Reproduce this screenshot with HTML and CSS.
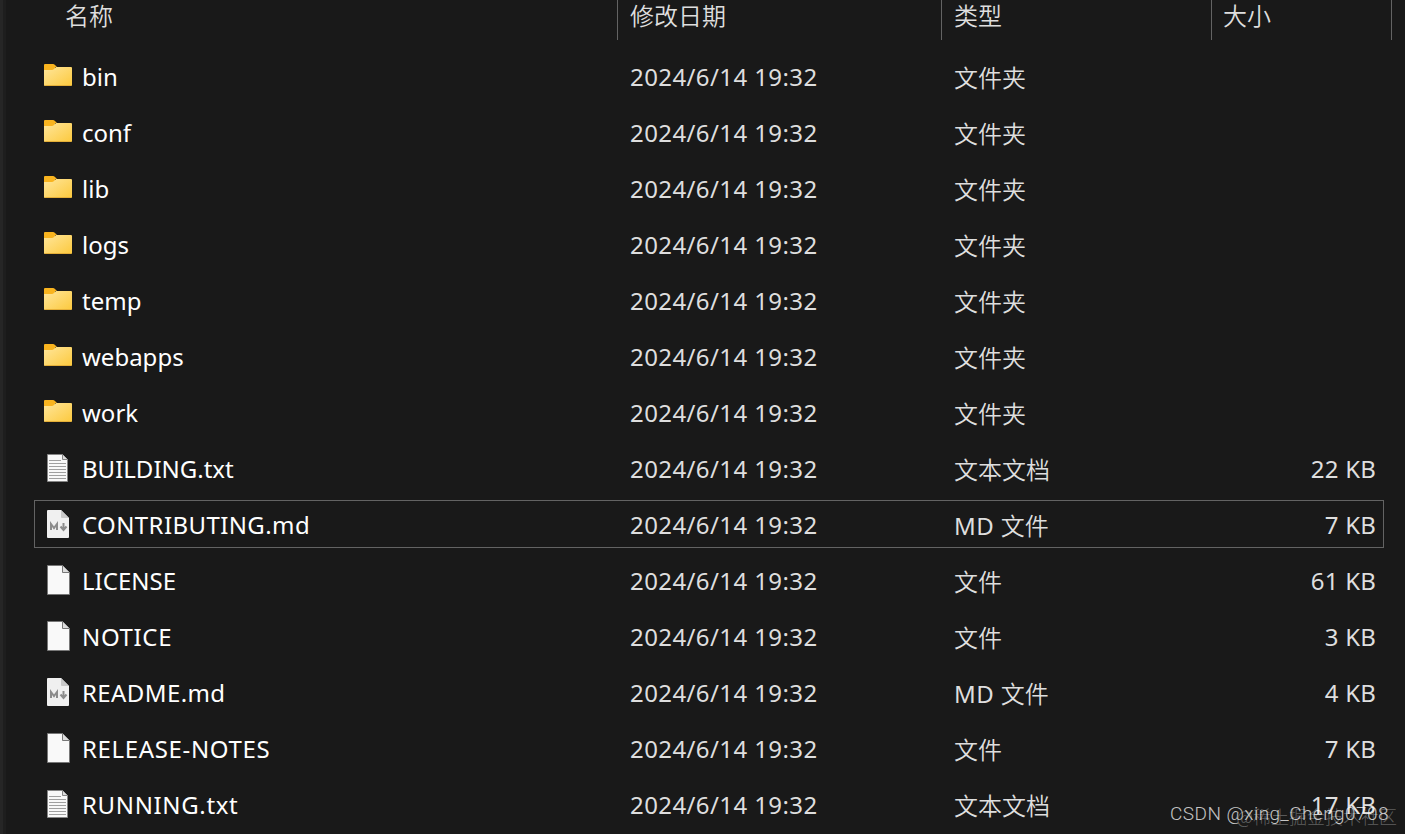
FILE: index.html
```html
<!DOCTYPE html>
<html lang="zh-CN">
<head>
  <meta charset="UTF-8">
  <title>文件列表</title>
  <link rel="stylesheet" href="styles.css">
</head>
<body>
  <!-- 图标 -->
  <svg class="defs" width="0" height="0">
    <defs>
      <linearGradient id="gold" x1="0" y1="0" x2="1" y2="1">
        <stop offset="0" stop-color="#ffe69b"/>
        <stop offset="1" stop-color="#fcc93d"/>
      </linearGradient>
    </defs>
    <symbol id="folder" viewBox="0 0 32 32">
      <path d="M2 5q0-1 1-1h8q1 0 2 1l2 2h-2v5H2z" fill="#f9b41f"/>
      <path d="M2 10h8q1 0 2-1l2-2h15q1 0 1 1v17q0 1-1 1H3q-1 0-1-1z" fill="url(#gold)"/>
      <path d="M2.500 25q.5 1 1.500 1h24q1 0 1.500-1z" fill="#e5af38"/>
    </symbol>
    <symbol id="text" viewBox="0 0 32 32">
      <path d="M5.500 2.500h15l5 5v22h-20z" fill="#f9f9f9" stroke="#858585"/>
      <path d="M20.500 2.500v5h5" fill="#ddd" stroke="#858585"/>
      <path d="M7 8.500h12M7 11.500h17M7 14.500h17M7 17.500h17M7 20.500h17M7 23.500h17M7 26.500h17" stroke="#a0a0a0"/>
    </symbol>
    <symbol id="md" viewBox="0 0 32 32">
      <path d="M6 2h13l8 8v19q0 1-1 1H6q-1 0-1-1V3q0-1 1-1z" fill="#f0f0f0"/>
      <path d="M19 2l8 8h-7q-1 0-1-1z" fill="#c9c9c9"/>
      <path d="M9 22v-6l3 4 3-4v6" fill="none" stroke="#8c8c8c" stroke-width="2"/>
      <path d="M21.500 15v6M18.500 18.500l3 3.500 3-3.500" fill="none" stroke="#8c8c8c" stroke-width="2"/>
    </symbol>
    <symbol id="blank" viewBox="0 0 32 32">
      <path d="M5.500 1.500h15l7 7v22h-22z" fill="#f9f9f9" stroke="#777"/>
      <path d="M20.500 1.500v7h7" fill="#ddd" stroke="#777"/>
    </symbol>
  </svg>

  <div class="explorer">
    <div class="header">
      <div class="head-name">名称</div>
      <div class="head-cell">修改日期</div>
      <div class="head-cell">类型</div>
      <div class="head-cell">大小</div>
    </div>
    <div class="list">
      <div class="row"><svg class="icon"><use href="#folder"/></svg><span class="name">bin</span><span class="date">2024/6/14 19:32</span><span class="type">文件夹</span><span class="size"></span></div>
      <div class="row"><svg class="icon"><use href="#folder"/></svg><span class="name">conf</span><span class="date">2024/6/14 19:32</span><span class="type">文件夹</span><span class="size"></span></div>
      <div class="row"><svg class="icon"><use href="#folder"/></svg><span class="name">lib</span><span class="date">2024/6/14 19:32</span><span class="type">文件夹</span><span class="size"></span></div>
      <div class="row"><svg class="icon"><use href="#folder"/></svg><span class="name">logs</span><span class="date">2024/6/14 19:32</span><span class="type">文件夹</span><span class="size"></span></div>
      <div class="row"><svg class="icon"><use href="#folder"/></svg><span class="name">temp</span><span class="date">2024/6/14 19:32</span><span class="type">文件夹</span><span class="size"></span></div>
      <div class="row"><svg class="icon"><use href="#folder"/></svg><span class="name">webapps</span><span class="date">2024/6/14 19:32</span><span class="type">文件夹</span><span class="size"></span></div>
      <div class="row"><svg class="icon"><use href="#folder"/></svg><span class="name">work</span><span class="date">2024/6/14 19:32</span><span class="type">文件夹</span><span class="size"></span></div>
      <div class="row"><svg class="icon"><use href="#text"/></svg><span class="name">BUILDING.txt</span><span class="date">2024/6/14 19:32</span><span class="type">文本文档</span><span class="size">22 KB</span></div>
      <div class="row focused"><svg class="icon"><use href="#md"/></svg><span class="name wide">CONTRIBUTING.md</span><span class="date">2024/6/14 19:32</span><span class="type"><span class="latin">MD </span>文件</span><span class="size">7 KB</span></div>
      <div class="row"><svg class="icon"><use href="#blank"/></svg><span class="name">LICENSE</span><span class="date">2024/6/14 19:32</span><span class="type">文件</span><span class="size">61 KB</span></div>
      <div class="row"><svg class="icon"><use href="#blank"/></svg><span class="name wider">NOTICE</span><span class="date">2024/6/14 19:32</span><span class="type">文件</span><span class="size">3 KB</span></div>
      <div class="row"><svg class="icon"><use href="#md"/></svg><span class="name wide">README.md</span><span class="date">2024/6/14 19:32</span><span class="type"><span class="latin">MD </span>文件</span><span class="size">4 KB</span></div>
      <div class="row"><svg class="icon"><use href="#blank"/></svg><span class="name wider">RELEASE-NOTES</span><span class="date">2024/6/14 19:32</span><span class="type">文件</span><span class="size">7 KB</span></div>
      <div class="row"><svg class="icon"><use href="#text"/></svg><span class="name wider">RUNNING.txt</span><span class="date">2024/6/14 19:32</span><span class="type">文本文档</span><span class="size">17 KB</span></div>
    </div>
  </div>

  <!-- 水印 -->
  <div class="mark mark-site">@稀土掘金技术社区</div>
  <div class="mark mark-author">CSDN @xing_Cheng0708</div>
</body>
</html>
```
FILE: styles.css
```css
* {
  box-sizing: border-box;
}
body {
  margin: 0;
  height: 834px;
  overflow: hidden;
  position: relative;
  background-color: #191919;
  color: #dedede;
  font-family: "Noto Sans", "Noto Sans CJK SC", sans-serif;
  font-size: 24px;
}
.defs {
  position: absolute;
}
.explorer {
  height: 834px;
  background: linear-gradient(90deg, #262626 3px, #1e1e1e 3px, #1e1e1e 6px, #191919 6px);
  padding-left: 34px;
}
.header {
  display: grid;
  grid-template-columns: 583px 324px 270px 181px;
  height: 40px;
  margin-bottom: 12px;
  line-height: 30px;
  font-family: "Noto Sans CJK SC", sans-serif;
  font-weight: 350;
}
.head-name {
  padding-left: 31px;
}
.head-cell {
  border-left: 1px solid #636363;
  padding-left: 12px;
}
.head-cell:last-child {
  border-right: 1px solid #636363;
  padding-left: 11px;
}
.list {
  display: flex;
  flex-direction: column;
  gap: 8px;
  width: 1350px;
}
.row {
  display: grid;
  grid-template-columns: 40px 548px 324px 270px 152px;
  height: 48px;
  padding-left: 7px;
  border: 1px solid transparent;
  line-height: 47px;
  white-space: nowrap;
}
.focused {
  border-color: #636363;
}
.icon {
  width: 32px;
  height: 32px;
  margin-top: 7px;
}
.name {
  color: #fff;
}
.wide {
  letter-spacing: 0.4px;
}
.wider {
  letter-spacing: 0.65px;
}
.date {
  letter-spacing: 0.4px;
}
.type {
  font-family: "Noto Sans CJK SC", sans-serif;
  font-weight: 350;
  line-height: 48px;
}
.latin {
  font-family: "Noto Sans", sans-serif;
  font-weight: 400;
  letter-spacing: 0.4px;
}
.size {
  text-align: right;
  letter-spacing: 0.2px;
}
/* 右下角水印，叠在列表上 */
.mark {
  position: absolute;
  white-space: nowrap;
}
.mark-site {
  right: 8px;
  bottom: 5px;
  font-family: "Noto Sans CJK SC", sans-serif;
  font-weight: 300;
  font-size: 18px;
  color: rgba(255, 255, 255, 0.3);
}
.mark-author {
  right: 16px;
  bottom: 9px;
  font-family: Roboto, sans-serif;
  font-weight: 300;
  font-size: 19px;
  letter-spacing: 0.45px;
  color: rgba(255, 255, 255, 0.75);
}
```
